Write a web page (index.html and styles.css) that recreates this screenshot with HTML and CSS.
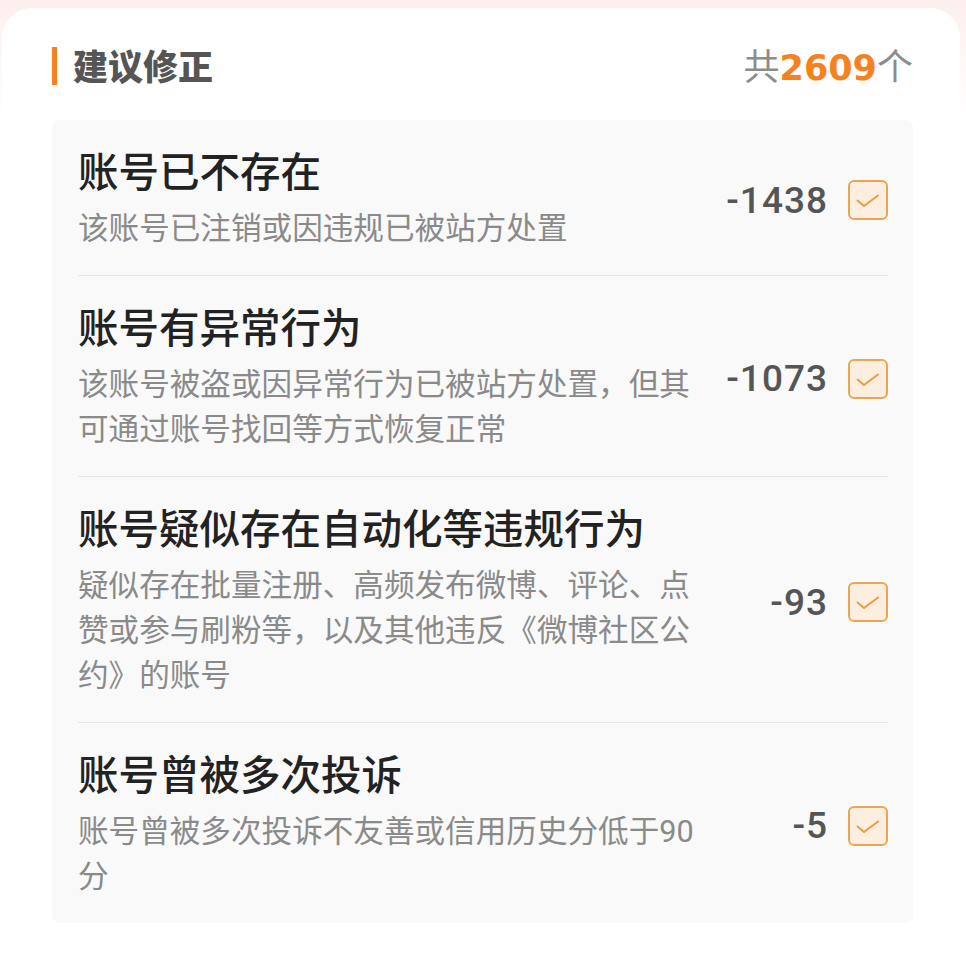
FILE: index.html
```html
<!DOCTYPE html>
<html lang="zh-CN">
<head>
  <meta charset="UTF-8" />
  <meta name="viewport" content="width=device-width, initial-scale=1" />
  <title>建议修正</title>
  <link rel="stylesheet" href="styles.css">
</head>
<body>

  <main class="card">
    <header class="card-head">
      <h1 class="card-title">建议修正</h1>
      <div class="card-total">共<strong>2609</strong>个</div>
    </header>

    <section class="panel">
      <div class="row">
        <div class="row-text">
          <div class="row-title">账号已不存在</div>
          <div class="row-desc">该账号已注销或因违规已被站方处置</div>
        </div>
        <div class="row-side">
          <span class="row-num">-1438</span>
          <span class="check" aria-label="已选中">
            <svg viewBox="0 0 26 26" width="26" height="26"><path d="M2.5 13.5 L9 19 L23 8.5" fill="none" stroke="#ec9a45" stroke-width="2" stroke-linecap="round" stroke-linejoin="round"/></svg>
          </span>
        </div>
      </div>

      <div class="row">
        <div class="row-text">
          <div class="row-title">账号有异常行为</div>
          <div class="row-desc">该账号被盗或因异常行为已被站方处置，但其可通过账号找回等方式恢复正常</div>
        </div>
        <div class="row-side">
          <span class="row-num">-1073</span>
          <span class="check" aria-label="已选中">
            <svg viewBox="0 0 26 26" width="26" height="26"><path d="M2.5 13.5 L9 19 L23 8.5" fill="none" stroke="#ec9a45" stroke-width="2" stroke-linecap="round" stroke-linejoin="round"/></svg>
          </span>
        </div>
      </div>

      <div class="row">
        <div class="row-text">
          <div class="row-title">账号疑似存在自动化等违规行为</div>
          <div class="row-desc">疑似存在批量注册、高频发布微博、评论、点赞或参与刷粉等，以及其他违反《微博社区公约》的账号</div>
        </div>
        <div class="row-side">
          <span class="row-num">-93</span>
          <span class="check" aria-label="已选中">
            <svg viewBox="0 0 26 26" width="26" height="26"><path d="M2.5 13.5 L9 19 L23 8.5" fill="none" stroke="#ec9a45" stroke-width="2" stroke-linecap="round" stroke-linejoin="round"/></svg>
          </span>
        </div>
      </div>

      <div class="row">
        <div class="row-text">
          <div class="row-title">账号曾被多次投诉</div>
          <div class="row-desc">账号曾被多次投诉不友善或信用历史分低于90分</div>
        </div>
        <div class="row-side">
          <span class="row-num">-5</span>
          <span class="check" aria-label="已选中">
            <svg viewBox="0 0 26 26" width="26" height="26"><path d="M2.5 13.5 L9 19 L23 8.5" fill="none" stroke="#ec9a45" stroke-width="2" stroke-linecap="round" stroke-linejoin="round"/></svg>
          </span>
        </div>
      </div>
    </section>
  </main>

</body>
</html>
```

FILE: styles.css
```css
/* Page */
body {
  margin: 0;
  background: linear-gradient(#fcefed 0, #fdf5f4 40px, #fff 120px);
  font-family: Roboto, "Noto Sans CJK SC", sans-serif;
  color: #222;
  height: 960px;
}

.card {
  margin: 8px 6px 0 2px;
  background: #fff;
  border-radius: 30px 30px 0 0;
  padding: 39px 47px 0 50px;
  height: 952px;
  box-sizing: border-box;
}

/* Header */
.card-head {
  display: flex;
  align-items: center;
  justify-content: space-between;
  height: 38px;
  margin-bottom: 35px;
}

.card-title {
  margin: 0;
  font-size: 35px;
  font-weight: 900;
  color: #555;
  line-height: 38px;
  border-left: 5px solid #f5821f;
  padding-left: 16px;
  padding-top: 3px;
  height: 38px;
  box-sizing: border-box;
}

.card-total {
  font-size: 36px;
  color: #8c8c8c;
  line-height: 38px;
  padding-top: 4px;
}

.card-total strong {
  color: #f5821f;
  font-family: "DejaVu Sans", sans-serif;
  font-weight: 700;
  font-size: 35px;
}

/* Panel */
.panel {
  background: #f9f9f9;
  border-radius: 8px;
  padding: 0 25px 0 26px;
}

.row {
  display: flex;
  align-items: center;
  padding: 29px 0 24px;
  border-bottom: 1px solid #e6e6e6;
}
.row:last-child {
  border-bottom: none;
}

.row-text {
  width: 630px;
  flex: none;
}

.row-title {
  font-size: 40.5px;
  font-weight: 500;
  line-height: 48px;
  color: #222;
  margin-bottom: 9px;
}

.row-desc {
  font-size: 30.6px;
  line-height: 45px;
  color: #8a8a8a;
}

.row-side {
  flex: 1;
  display: flex;
  align-items: center;
  justify-content: flex-end;
  gap: 20px;
}

.row-num {
  font-size: 37px;
  font-weight: 500;
  color: #555;
  letter-spacing: 1px;
}

.check {
  width: 40px;
  height: 40px;
  box-sizing: border-box;
  border: 2.5px solid #eca653;
  border-radius: 6px;
  background: #fdefe0;
  display: flex;
  align-items: center;
  justify-content: center;
}
```
